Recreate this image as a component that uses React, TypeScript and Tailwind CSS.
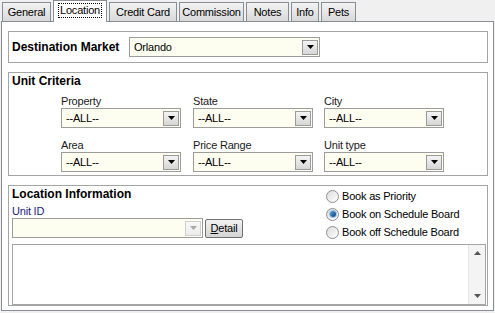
import React from "react";

const tabs = [
  { label: "General", w: "w-[49px]" },
  { label: "Location", w: "w-[54px]", active: true },
  { label: "Credit Card", w: "w-[68px]" },
  { label: "Commission", w: "w-[65px]" },
  { label: "Notes", w: "w-[43px]" },
  { label: "Info", w: "w-[28px]" },
  { label: "Pets", w: "w-[35px]" },
];

function DropButton({ disabled }: { disabled?: boolean }) {
  return (
    <div
      className={
        "w-[16px] h-[15px] mr-[1px] flex items-center justify-center border " +
        (disabled
          ? "border-[#d0d0d0] bg-gradient-to-b from-[#f8f8f8] to-[#ececec]"
          : "border-[#9a9a9a] bg-gradient-to-b from-[#f4f4f4] to-[#d6d6d6]")
      }
    >
      <svg width="7" height="4" viewBox="0 0 7 4">
        <path d="M0 0 H7 L3.5 4 Z" fill={disabled ? "#a8a8a8" : "#000"} />
      </svg>
    </div>
  );
}

function Combo({ value, w, disabled }: { value: string; w: string; disabled?: boolean }) {
  return (
    <div
      className={
        w +
        " h-[20px] flex items-center justify-between border border-[#9c9c9c] bg-[#fefef0]"
      }
    >
      <span className="pl-[4px] text-[11px] text-black">{value}</span>
      <DropButton disabled={disabled} />
    </div>
  );
}

function Radio({ label, checked }: { label: string; checked?: boolean }) {
  return (
    <div className="h-[18px] flex items-center gap-[3px]">
      <div className="w-[13px] h-[13px] rounded-full border border-[#8e8f8f] bg-gradient-to-br from-[#dcdcdc] to-[#ffffff] flex items-center justify-center">
        {checked && (
          <div className="w-[6px] h-[6px] rounded-full bg-gradient-to-br from-[#5aa5e0] to-[#0a3f7a] ring-1 ring-[#9cc6ea]" />
        )}
      </div>
      <span className="text-[11px] text-black">{label}</span>
    </div>
  );
}

function Field({ label, value }: { label: string; value: string }) {
  return (
    <div className="flex flex-col">
      <span className="h-[13px] leading-[13px] text-[11px] text-[#1a1a1a]">{label}</span>
      <Combo value={value} w="w-[120px]" />
    </div>
  );
}

export default function App() {
  return (
    <div
      className="w-[495px] h-[313px] bg-[#f0f0f0] overflow-hidden text-[11px] tracking-[-0.2px]"
      style={{ fontFamily: '"Liberation Sans", Arial, sans-serif' }}
    >
      {/* Tab strip */}
      <div className="h-[21px] pl-[2px] flex items-end gap-[2px]">
        {tabs.map((t) =>
          t.active ? (
            <div
              key={t.label}
              className={
                t.w +
                " h-[22px] -mb-[1px] relative z-10 border border-b-0 border-[#898c95] bg-white flex items-start justify-center pt-[2px]"
              }
            >
              <span className="border border-dotted border-black px-[1px] leading-[13px]">{t.label}</span>
            </div>
          ) : (
            <div
              key={t.label}
              className={
                t.w +
                " h-[19px] border border-b-0 border-[#898c95] bg-gradient-to-b from-[#f3f3f3] to-[#d9d9d9] flex items-center justify-center"
              }
            >
              {t.label}
            </div>
          )
        )}
      </div>

      {/* Panel */}
      <div className="ml-[1px] w-[493px] h-[290px] border border-[#898c95] bg-white pl-[6px] pt-[9px]">
        {/* Destination Market */}
        <div className="w-[480px] h-[32px] border border-[#a5a5a5] flex items-center">
          <span className="w-[120px] pl-[3px] font-bold text-[12px] tracking-normal">Destination Market</span>
          <Combo value="Orlando" w="w-[191px]" />
        </div>

        {/* Unit Criteria */}
        <div className="mt-[9px] w-[480px] h-[104px] border border-[#a5a5a5] pt-[2px]">
          <div className="pl-[3px] h-[13px] leading-[13px] font-bold text-[12px] tracking-normal">Unit Criteria</div>
          <div className="mt-[7px] pl-[52px] grid grid-cols-[132px_131px_132px] gap-y-[11px]">
            <Field label="Property" value="--ALL--" />
            <Field label="State" value="--ALL--" />
            <Field label="City" value="--ALL--" />
            <Field label="Area" value="--ALL--" />
            <Field label="Price Range" value="--ALL--" />
            <Field label="Unit type" value="--ALL--" />
          </div>
        </div>

        {/* Location Information */}
        <div className="mt-[9px] w-[480px] h-[121px] border border-[#a5a5a5]">
          <div className="flex">
            <div className="w-[317px] pl-[3px] pt-[2px]">
              <div className="h-[13px] leading-[13px] font-bold text-[12px] tracking-normal">Location Information</div>
              <div className="mt-[4px] h-[13px] leading-[13px] text-[#1b1b78]">Unit ID</div>
              <div className="flex items-center gap-[2px]">
                <Combo value="" w="w-[191px]" disabled />
                <button className="w-[38px] h-[19px] rounded-[2px] border border-[#707070] bg-gradient-to-b from-[#f2f2f2] to-[#d4d4d4] text-[11px] leading-[15px]">
                  <span className="underline">D</span>etail
                </button>
              </div>
            </div>
            <div className="pt-[1px]">
              <Radio label="Book as Priority" />
              <Radio label="Book on Schedule Board" checked />
              <Radio label="Book off Schedule Board" />
            </div>
          </div>
          <div className="mt-[3px] ml-[3px] w-[474px] h-[61px] border border-[#a5a5a5] flex justify-end">
            <div className="w-[17px] h-full flex flex-col justify-between bg-[#f4f4f4] border-l border-[#e6e6e6]">
              <div className="h-[16px] flex items-center justify-center">
                <svg width="7" height="4" viewBox="0 0 7 4">
                  <path d="M3.5 0 L7 4 H0 Z" fill="#555" />
                </svg>
              </div>
              <div className="h-[16px] flex items-center justify-center">
                <svg width="7" height="4" viewBox="0 0 7 4">
                  <path d="M0 0 H7 L3.5 4 Z" fill="#555" />
                </svg>
              </div>
            </div>
          </div>
        </div>
      </div>
    </div>
  );
}
